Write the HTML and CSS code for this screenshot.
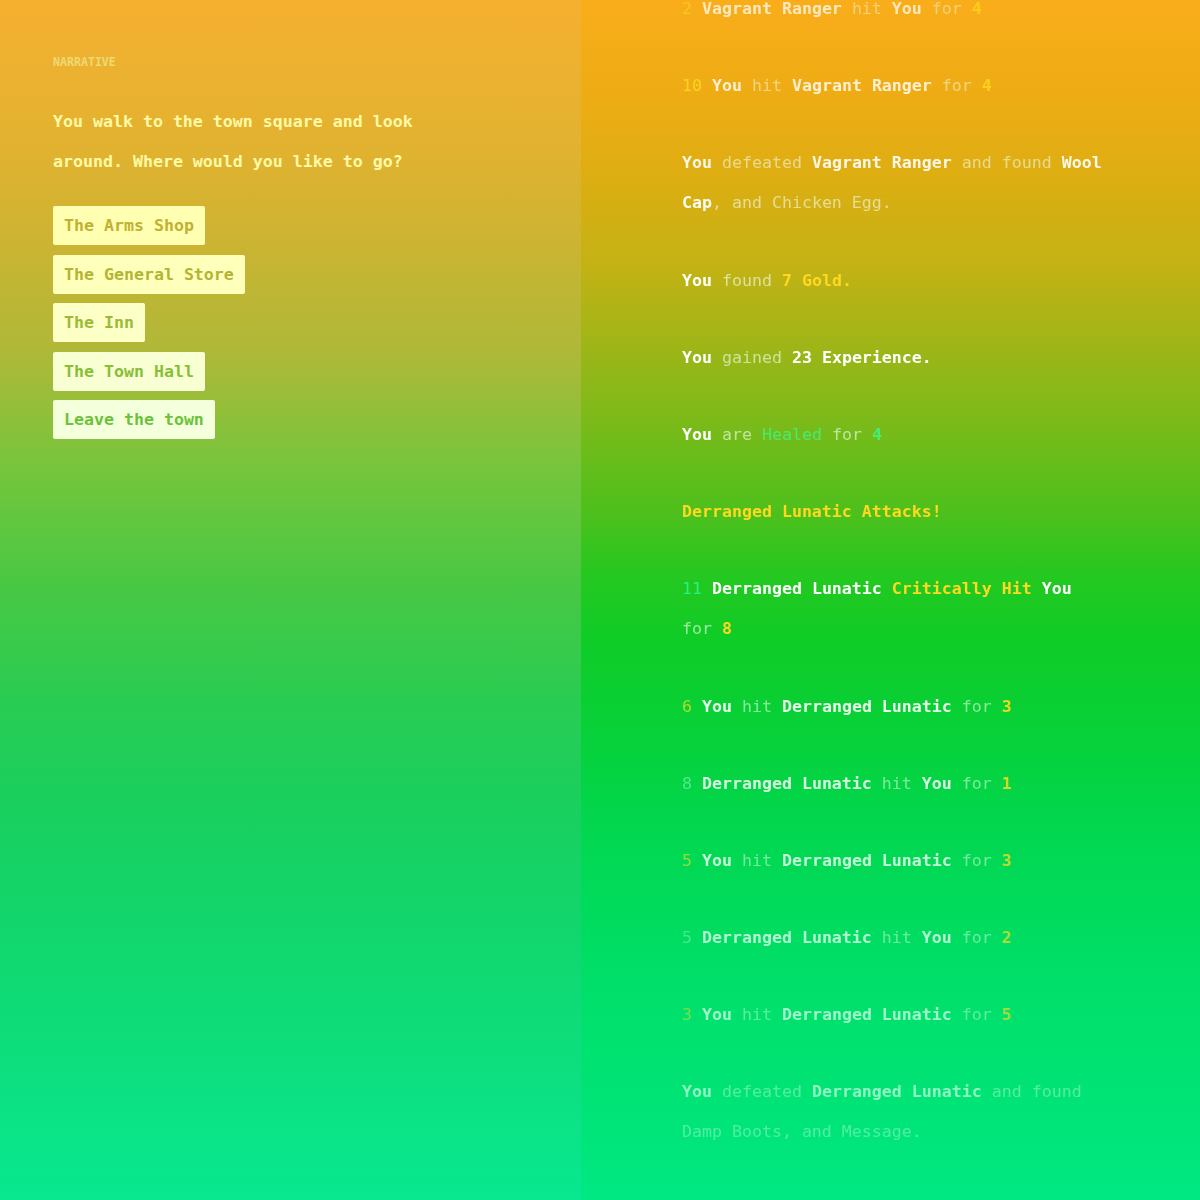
FILE: index.html
```html
<!DOCTYPE html>
<html lang="en">
<head>
<meta charset="utf-8">
<title>Town Square</title>
<link rel="stylesheet" href="styles.css">
</head>
<body>
<div class="page">
  <section class="narrative">
    <div class="label">NARRATIVE</div>
    <p class="story">You walk to the town square and look around. Where would you like to go?</p>
    <div class="choices">
      <button class="choice c1">The Arms Shop</button>
      <button class="choice c2">The General Store</button>
      <button class="choice c3">The Inn</button>
      <button class="choice c4">The Town Hall</button>
      <button class="choice c5">Leave the town</button>
    </div>
  </section>
  <section class="log-panel">
    <div class="log">
      <p class="entry"><span class="roll ry">2</span> <b>Vagrant Ranger</b> <span class="d">hit</span> <b>You</b> <span class="d">for</span> <b class="y">4</b></p>
      <p class="entry"><span class="roll ry2">10</span> <b>You</b> <span class="d">hit</span> <b>Vagrant Ranger</b> <span class="d">for</span> <b class="y">4</b></p>
      <p class="entry"><b>You</b> <span class="d">defeated</span> <b>Vagrant Ranger</b> <span class="d">and found</span> <b>Wool Cap</b><span class="d">, and Chicken Egg.</span></p>
      <p class="entry"><b>You</b> <span class="d">found</span> <b class="y">7 Gold.</b></p>
      <p class="entry"><b>You</b> <span class="d">gained</span> <b>23 Experience.</b></p>
      <p class="entry"><b>You</b> <span class="d">are</span> <span class="g">Healed</span> <span class="d">for</span> <b class="g">4</b></p>
      <p class="entry"><b class="y">Derranged Lunatic Attacks!</b></p>
      <p class="entry"><span class="roll rg">11</span> <b>Derranged Lunatic</b> <b class="y">Critically Hit</b> <b>You</b> <span class="d">for</span> <b class="y">8</b></p>
      <p class="entry"><span class="roll ry">6</span> <b>You</b> <span class="d">hit</span> <b>Derranged Lunatic</b> <span class="d">for</span> <b class="y">3</b></p>
      <p class="entry"><span class="roll rw">8</span> <b>Derranged Lunatic</b> <span class="d">hit</span> <b>You</b> <span class="d">for</span> <b class="y">1</b></p>
      <p class="entry"><span class="roll ry">5</span> <b>You</b> <span class="d">hit</span> <b>Derranged Lunatic</b> <span class="d">for</span> <b class="y">3</b></p>
      <p class="entry"><span class="roll rw">5</span> <b>Derranged Lunatic</b> <span class="d">hit</span> <b>You</b> <span class="d">for</span> <b class="y">2</b></p>
      <p class="entry"><span class="roll ry">3</span> <b>You</b> <span class="d">hit</span> <b>Derranged Lunatic</b> <span class="d">for</span> <b class="y">5</b></p>
      <p class="entry"><b>You</b> <span class="d">defeated</span> <b>Derranged Lunatic</b> <span class="d">and found Damp Boots, and Message.</span></p>
    </div>
  </section>
</div>
</body>
</html>
```

FILE: styles.css
```css
* { box-sizing: border-box; }
html, body { margin: 0; padding: 0; }
body {
  width: 1200px;
  height: 1200px;
  overflow: hidden;
  font-family: "DejaVu Sans Mono", "Liberation Mono", monospace;
  font-size: 16.6px;
}
.page {
  display: grid;
  grid-template-columns: 581px 1fr;
  height: 1200px;
}
.narrative {
  background: linear-gradient(180deg, #f6b030 0%, #e2b230 12%, #ccb432 20%, #b0b838 29%, #8ec03a 35%, #70c63c 40%, #48c844 49%, #2acc52 58%, #18d060 68%, #10d870 80%, #08e890 100%);
  padding: 54px 53px 0;
}
.label {
  font-size: 11.6px;
  line-height: 16px;
  font-weight: bold;
  color: rgba(240, 230, 140, 0.75);
  margin-bottom: 32px;
}
.story {
  margin: 0;
  max-width: 425px;
  line-height: 40px;
  font-weight: bold;
  color: #fffaa6;
}
.choices {
  margin-top: 24px;
  display: flex;
  flex-direction: column;
  align-items: flex-start;
  gap: 9.5px;
}
.choice {
  font: inherit;
  font-weight: bold;
  height: 39px;
  padding: 0 11px;
  border: none;
  border-radius: 2px;
  line-height: 39px;
  cursor: pointer;
}
.c1 { background: #ffffb2; color: #bfb132; }
.c2 { background: #ffffbc; color: #b2b434; }
.c3 { background: #fcffc6; color: #9cba36; }
.c4 { background: #f8ffd2; color: #88be38; }
.c5 { background: #f4ffdc; color: #6cc23a; }

.log-panel {
  background: linear-gradient(180deg, #f9ad1a 0%, #eeac14 8%, #dcae12 15%, #c4b214 22%, #98b618 30%, #70bc1a 37%, #4cc01c 43%, #24c820 48%, #10cc26 53%, #08d036 60%, #02d64c 68%, #00de66 80%, #00e882 100%);
  overflow: hidden;
  height: 1200px;
}
.log {
  height: 1200px;
  padding: 0 88px 0 101px;
  -webkit-mask-image: linear-gradient(180deg, rgba(0,0,0,.7) 0px, #000 260px, #000 620px, rgba(0,0,0,.48) 1200px);
  mask-image: linear-gradient(180deg, rgba(0,0,0,.7) 0px, #000 260px, #000 620px, rgba(0,0,0,.48) 1200px);
}
.entry {
  margin: 0 0 37.2px;
  line-height: 40px;
  max-width: 425px;
  color: #fff;
}
.entry:first-child { margin-top: -11px; }
.entry b { font-weight: bold; color: #fff; }
.d { color: rgba(240, 255, 240, 0.62); }
.entry .y { color: #ffd820; }
.entry .g, .g { color: #46ec74; }
.roll { font-weight: normal; }
.ry { color: rgba(255, 222, 40, 0.75); }
.ry2 { color: rgba(255, 222, 40, 0.95); }
.rg { color: #24f286; }
.rw { color: rgba(150, 255, 200, 0.6); }
```
